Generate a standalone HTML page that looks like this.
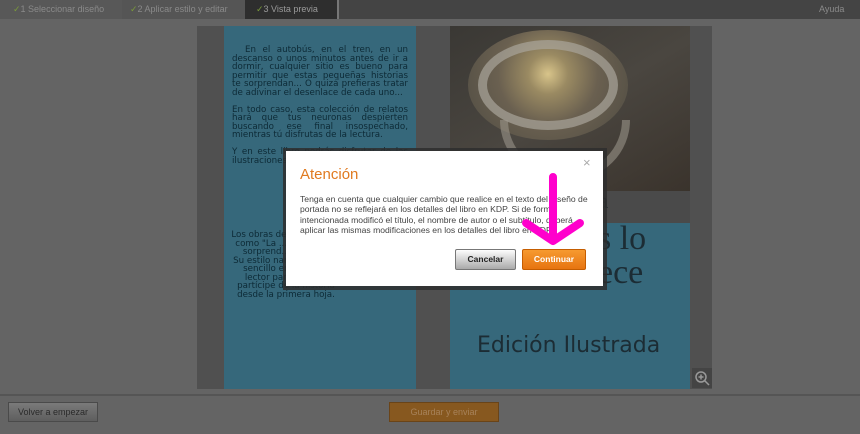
<!DOCTYPE html>
<html><head><meta charset="utf-8"><style>
*{margin:0;padding:0;box-sizing:border-box}
body{width:860px;height:434px;overflow:hidden;background:#646464;font-family:"Liberation Sans",sans-serif;position:relative}
.abs{position:absolute}
.top{left:0;top:0;width:860px;height:19px;background:#4a4a4a}
.step{top:0;height:19px;font-size:9px;color:#8a8a8a;line-height:18px}
.ck{color:#7a9a3a}
.back{font-size:8.7px;line-height:8.5px;color:#0d2a36;text-align:justify;font-family:"DejaVu Sans",sans-serif}
</style></head><body>
<div class="abs top"></div>
<div class="abs" style="left:0;top:0;width:122px;height:19px;background:#585858"></div>
<div class="abs" style="left:122px;top:0;width:123px;height:19px;background:#555"></div>
<div class="abs" style="left:245px;top:0;width:92px;height:19px;background:#2e2e2e"></div>
<div class="abs" style="left:337px;top:0;width:2px;height:19px;background:#777"></div>
<div class="abs" style="left:339px;top:0;width:521px;height:19px;background:#444"></div>
<div class="abs step" style="left:13px"><span class="ck">✓</span>1 Seleccionar diseño</div>
<div class="abs step" style="left:130px"><span class="ck">✓</span>2 Aplicar estilo y editar</div>
<div class="abs step" style="left:256px;color:#9a9a9a"><span class="ck">✓</span>3 Vista previa</div>
<div class="abs step" style="left:819px">Ayuda</div>

<div class="abs" style="left:197px;top:26px;width:515px;height:363px;background:#505050"></div>
<div class="abs" style="left:224px;top:26px;width:192px;height:363px;background:#36687b"></div>
<div class="abs" style="left:450px;top:26px;width:240px;height:363px;background:#36687b"></div>
<div class="abs" style="left:450px;top:26px;width:240px;height:165px;background:linear-gradient(150deg,#3a3834,#4a4640 50%,#3a332c)"></div>
<div class="abs" style="left:468px;top:30px;width:160px;height:110px;border-radius:50%;background:radial-gradient(circle at 50% 40%,#d8c48a 0,#9a8a62 20px,#6a6050 50px,#5a5448 80px)"></div>
<div class="abs" style="left:478px;top:40px;width:140px;height:90px;border:9px solid rgba(170,165,155,.7);border-radius:50%"></div>
<div class="abs" style="left:500px;top:120px;width:130px;height:60px;border:8px solid rgba(160,155,145,.55);border-top:none;border-radius:0 0 60px 60px"></div>
<div class="abs" style="left:450px;top:191px;width:240px;height:32px;background:#4a4a4a"></div>
<div class="abs" style="left:590px;top:188px;font-family:'Liberation Serif',serif;font-size:22px;color:#1f2a30">sa</div>
<div class="abs" style="left:598px;top:222px;font-family:'Liberation Serif',serif;font-size:34px;line-height:34px;color:#1c2c34">s lo<br>ece</div>
<div class="abs" style="left:477px;top:333px;font-family:'DejaVu Sans',sans-serif;font-size:22px;color:#1c2c34">Edición Ilustrada</div>
<div class="abs" style="left:692px;top:368px;width:20px;height:20px;background:#444"></div>
<svg class="abs" style="left:692px;top:368px" width="20" height="20"><circle cx="9" cy="9" r="5" fill="none" stroke="#999" stroke-width="1.5"/><path d="M12.5 12.5L17 17M9 6.5v5M6.5 9h5" stroke="#999" stroke-width="1.5"/></svg>

<div class="abs back" style="left:232px;top:46px;width:176px">&nbsp;&nbsp;En el autobús, en el tren, en un descanso o unos minutos antes de ir a dormir, cualquier sitio es bueno para permitir que estas pequeñas historias te sorprendan... O quizá prefieras tratar de adivinar el desenlace de cada uno...<br><br>En todo caso, esta colección de relatos hará que tus neuronas despierten buscando ese final insospechado, mientras tú disfrutas de la lectura.<br><br>Y en este libro podrás disfrutar de las ilustraciones de Schefret.</div>
<div class="abs back" style="left:230px;top:231px;width:112px;text-align:center">Los obras de Bastos, m... como "La ... caracterí... sorprend... argum...<br>Su estilo narrativo ágil y sencillo envuelve al lector para hacerlo partícipe de la historia desde la primera hoja.</div>

<div class="abs" style="left:0;top:394px;width:860px;height:2px;background:#555"></div>
<div class="abs" style="left:8px;top:402px;width:90px;height:20px;background:linear-gradient(#7a7a7a,#5e5e5e);border:1px solid #4a4a4a;font-size:9px;color:#2a2a2a;text-align:center;line-height:18px">Volver a empezar</div>
<div class="abs" style="left:389px;top:402px;width:110px;height:20px;background:#87581f;border:1px solid #6a4418;font-size:9px;color:#a7825a;text-align:center;line-height:18px">Guardar y enviar</div>

<div class="abs" style="left:283px;top:148px;width:324px;height:142px;background:#2e2e2e;opacity:.85"></div>
<div class="abs" style="left:286px;top:151px;width:317px;height:135px;background:#fff"></div>
<div class="abs" style="left:583px;top:155px;font-size:13px;color:#aaa">×</div>
<div class="abs" style="left:300px;top:166px;font-size:15px;color:#e07a20">Atención</div>
<div class="abs" style="left:300px;top:194px;width:298px;font-size:8.6px;line-height:10.4px;color:#444">Tenga en cuenta que cualquier cambio que realice en el texto del diseño de portada no se reflejará en los detalles del libro en KDP. Si de forma intencionada modificó el título, el nombre de autor o el subtítulo, deberá aplicar las mismas modificaciones en los detalles del libro en KDP.</div>
<div class="abs" style="left:455px;top:249px;width:61px;height:21px;background:linear-gradient(#fdfdfd,#aaa);border:1px solid #777;border-radius:2px;font-size:8.5px;font-weight:bold;color:#222;text-align:center;line-height:19px">Cancelar</div>
<div class="abs" style="left:522px;top:249px;width:64px;height:21px;background:linear-gradient(#f69a30,#e77410);border:1px solid #c55d00;border-radius:2px;font-size:8.5px;font-weight:bold;color:#fff;text-align:center;line-height:19px">Continuar</div>
<svg class="abs" style="left:510px;top:170px" width="90" height="80" viewBox="0 0 90 80"><path d="M43 7V70M16 53L43 71L70 53" fill="none" stroke="#ff00cc" stroke-width="8" stroke-linecap="round" stroke-linejoin="round"/></svg>
</body></html>
